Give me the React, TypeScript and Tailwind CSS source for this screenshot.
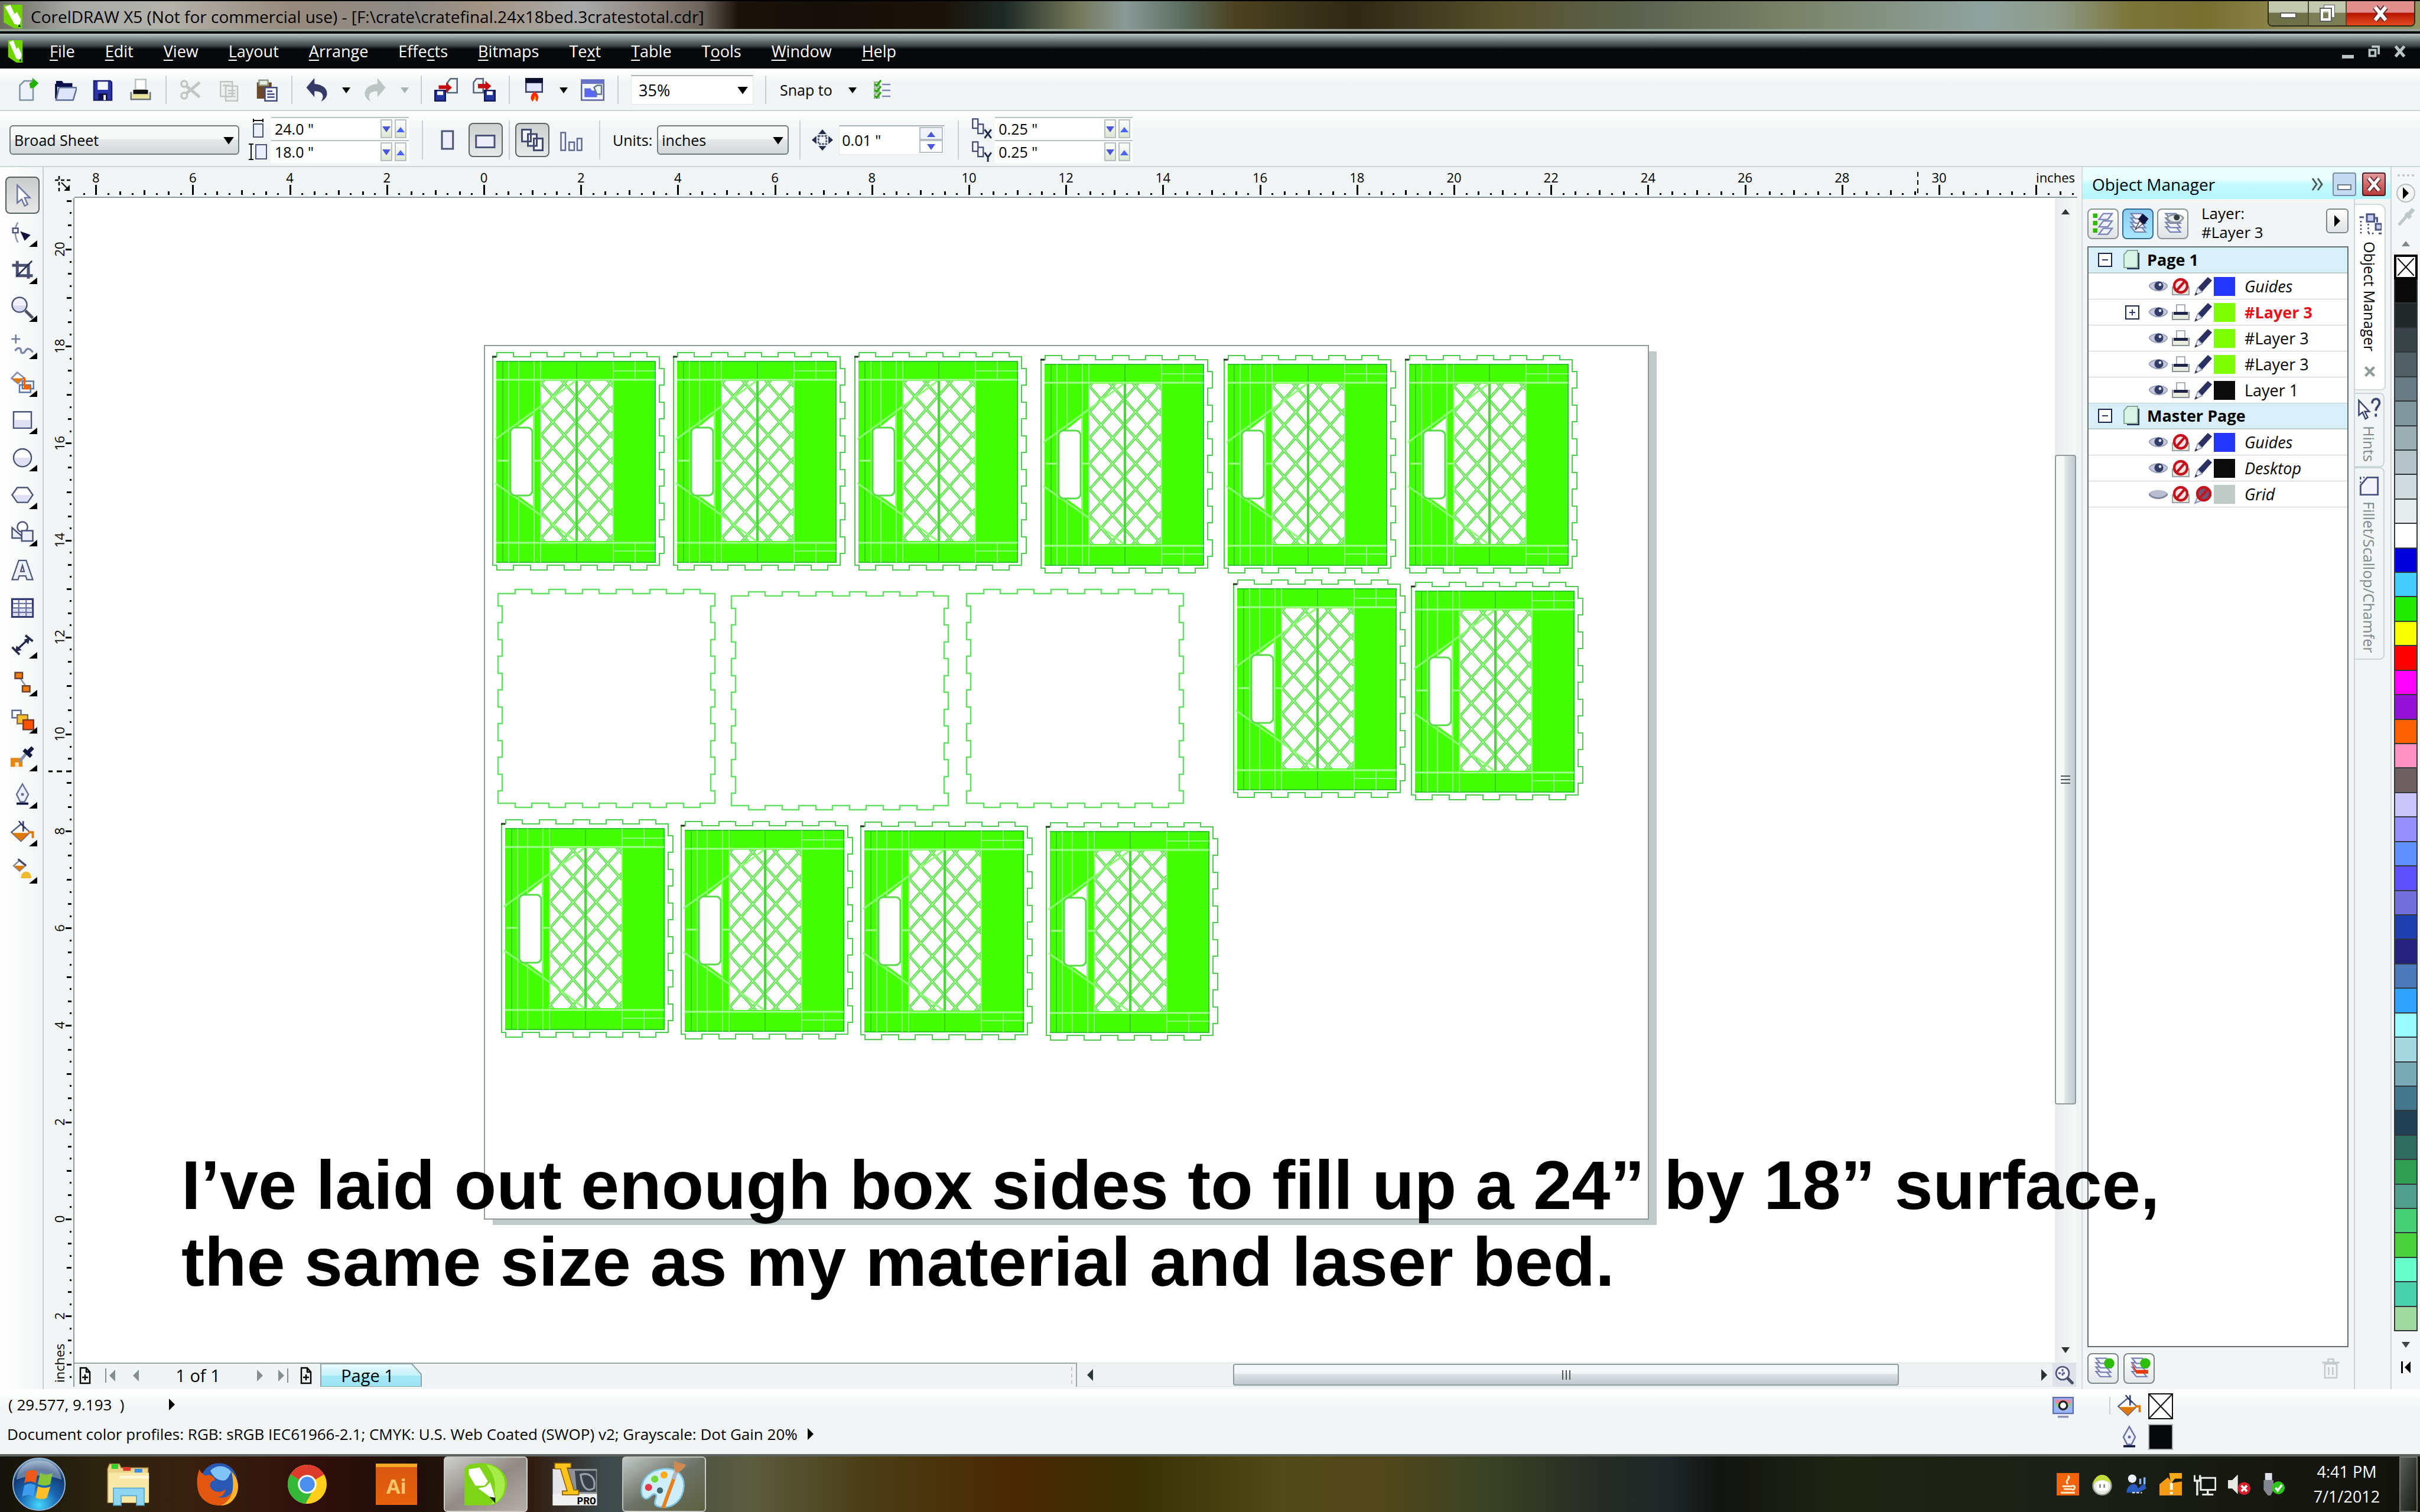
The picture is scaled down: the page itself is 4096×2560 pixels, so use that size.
import type { ReactNode } from 'react';

const MENUS: Array<[string, string, string]> = [
  ['', 'F', 'ile'], ['', 'E', 'dit'], ['', 'V', 'iew'], ['', 'L', 'ayout'], ['', 'A', 'rrange'], ['Effe', 'c', 'ts'],
  ['', 'B', 'itmaps'], ['Te', 'x', 't'], ['', 'T', 'able'], ['T', 'o', 'ols'], ['', 'W', 'indow'], ['', 'H', 'elp'],
];

const PALETTE = [
  '#0a0a0a', '#222727', '#3a4348', '#506064', '#687a82', '#80959c', '#9baeb4', '#b5c4c8', '#d2dcde', '#e6ebeb', '#ffffff',
  '#0000dd', '#46cdff', '#20ea00', '#f8ff00', '#ff0000', '#ff00ff', '#9510d8', '#fa5f00', '#ff92c0', '#6e6060', '#cac4fa',
  '#9690ff', '#5f90ff', '#5c50ff', '#726fdc', '#203fb0', '#25227e', '#4a78b8', '#2fa5ff', '#96faff', '#a6d8e0', '#7aaab5',
  '#44768e', '#204054', '#2f6b5e', '#2f9d52', '#52a08c', '#48d076', '#4ad23e', '#66ffcc', '#48d0aa', '#a0d8a0',
];

type Layer = { name: string; color: string; italic?: boolean; active?: boolean; noPrint?: boolean; hidden?: boolean; locked?: boolean };

const PAGES: Array<{ title: string; layers: Layer[] }> = [
  {
    title: 'Page 1',
    layers: [
      { name: 'Guides', color: '#2236ff', italic: true, noPrint: true },
      { name: '#Layer 3', color: '#7dff00', active: true },
      { name: '#Layer 3', color: '#7dff00' },
      { name: '#Layer 3', color: '#7dff00' },
      { name: 'Layer 1', color: '#0c0c0c' },
    ],
  },
  {
    title: 'Master Page',
    layers: [
      { name: 'Guides', color: '#2236ff', italic: true, noPrint: true },
      { name: 'Desktop', color: '#0c0c0c', italic: true, noPrint: true },
      { name: 'Grid', color: '#c0cac7', italic: true, noPrint: true, hidden: true, locked: true },
    ],
  },
];

/* ── Small building blocks ── */

function Ico({ children, className = 'size-10' }: { children: ReactNode; className?: string }) {
  return <svg viewBox="0 0 16 16" className={`shrink-0 ${className}`} fill="none" aria-hidden="true">{children}</svg>;
}

function Tri({ dir, className = 'text-black' }: { dir: 'up' | 'down' | 'left' | 'right'; className?: string }) {
  const d = {
    up: 'M-1 12 6 3l7 9z', down: 'M-1 2h14L6 12z', left: 'M11 -4v20L1 6z', right: 'M1 -4v20L11 6z',
  }[dir];
  return <svg viewBox="0 0 12 12" className={`size-3 shrink-0 overflow-visible ${className}`} fill="currentColor" aria-hidden="true"><path d={d} /></svg>;
}

function Sep({ tall }: { tall?: boolean }) {
  return (
    <div className="flex w-[21px] shrink-0 justify-center">
      <div className={tall ? 'h-[66px] w-0.5 bg-[#c9d1d3]' : 'h-12 w-0.5 bg-[#c9d1d3]'} />
    </div>
  );
}

function ToolButton({ label, children }: { label: string; children: ReactNode }) {
  return <button aria-label={label} className="flex h-14 w-16 shrink-0 items-center justify-center">{children}</button>;
}

function DropArrow({ label, dim }: { label: string; dim?: boolean }) {
  return (
    <button aria-label={label} className="flex h-14 w-[35px] shrink-0 items-center justify-center">
      <Tri dir="down" className={dim ? 'text-[#a9b2b2]' : 'text-black'} />
    </button>
  );
}

function Drop({ label, value, className, plain }: { label: string; value: string; className: string; plain?: boolean }) {
  return (
    <div className={`relative shrink-0 ${className}`}>
      <select
        aria-label={label}
        defaultValue={value}
        className={`h-[50px] w-full appearance-none leading-8 text-black ${
          plain
            ? 'border border-t-2 border-[#e3e8ea] border-t-[#a9b4b6] bg-white pl-3 text-[27px]'
            : 'rounded-md border-2 border-[#707b7b] bg-linear-to-b from-[#f7f9f9] from-45% via-[#e4e8e8] via-50% to-[#d3d8d8] pl-1.5 text-[25px]'
        }`}
      >
        <option>{value}</option>
      </select>
      <span className="pointer-events-none absolute inset-y-0 right-3 flex items-center"><Tri dir="down" className="scale-125 text-black" /></span>
    </div>
  );
}

function SpinPair({ label, value }: { label: string; value: string }) {
  return (
    <div className="flex h-[39px] w-[233px] shrink-0 items-center gap-1 border-t-2 border-[#b9c3c5] bg-white pr-1">
      <input aria-label={label} defaultValue={value} className="min-w-0 flex-1 pl-1.5 text-[25px] leading-8 text-black" />
      <button aria-label={`${label} down`} className="flex h-8 w-5 items-center justify-center border-2 border-[#b5bfc4] bg-linear-to-b from-white to-[#dbe6cf]"><Tri dir="down" className="text-[#4a56d8]" /></button>
      <button aria-label={`${label} up`} className="flex h-8 w-5 items-center justify-center border-2 border-[#b5bfc4] bg-linear-to-b from-white to-[#dbe6cf]"><Tri dir="up" className="text-[#4a66f8]" /></button>
    </div>
  );
}

function CorelMark() {
  return (
    <>
      <path d="M1 0h14v16H9L1 12z" fill="#6fd400" />
      <path d="M2 1.500 6 0l3 6-3 2zM6 8l5-3 3 5-1 4-4-1z" fill="#fff" />
      <path d="m12.500 13 1.500 2h-2z" fill="#123" />
    </>
  );
}

/* ── Standard toolbar icons ── */

const NewIcon = <Ico><path d="M3 5l3-3h6v13H3z" fill="#eef1fb" stroke="#7e93a0" /><path d="M10 4l2-1.500V1l3 2.500L12.500 6l-2 .5z" fill="#21b300" stroke="#21b300" /></Ico>;
const OpenIcon = <Ico><path d="M2 2h4l1 1.500h6V6H2z" fill="#0b1048" /><path d="M2 4v10" stroke="#0b1048" strokeWidth="1.500" /><path d="M4 6.500h12L13.500 15H2z" fill="#dfe6fa" stroke="#5f6f98" /></Ico>;
const SaveIcon = <Ico><path d="M2 2h11l1 1v12H2z" fill="#2b35a8" stroke="#1a2070" /><path d="M4.500 2.500h7V8h-7z" fill="#f3f5ff" /><path d="M5 10.500h6V15H5z" fill="#0b1048" /><path d="M8.500 11.500h1.500V15H8.500z" fill="#fff" /></Ico>;
const PrintIcon = <Ico><path d="M4.500 1h7v7h-7z" fill="#fff" stroke="#b7c3bf" /><path d="M3 8h10v3H3z" fill="#111" /><path d="M1.500 9.500v5h13v-5" stroke="#6b747c" /><path d="M2 11h12v3H2z" fill="#e6e39a" /></Ico>;
const CutIcon = <Ico><g stroke="#c0c7c5" strokeWidth="1.400"><circle cx="3.500" cy="4" r="2" /><circle cx="3.500" cy="12" r="2" /><path d="M5 5.500 14 13M5 10.500 14 3" strokeWidth="2" /></g></Ico>;
const CopyIcon = <Ico><path d="M2.500 2.500h8v10h-8zM6 5.500h8v10H6z" fill="#eef1f1" stroke="#c0c7c5" /><path d="M4 5h5M7.500 8.500h5M7.500 10.500h5M7.500 12.500h5" stroke="#c0c7c5" /></Ico>;
const PasteIcon = <Ico><path d="M1.500 3h10v11h-10z" fill="#6b4a2b" /><path d="M3 1.500h6V5H3z" fill="#e7eddc" stroke="#8c9a84" /><path d="M7 6.500h8v9H7z" fill="#fff" stroke="#3f4a80" /><path d="M8.500 9H12M8.500 11h5M8.500 13h5" stroke="#3f4a80" /></Ico>;
const UndoIcon = <Ico><path d="M1 6.500 6.500 0v4C12 4.500 15 7 15 10.500c0 2.500-1.500 4-4 5.500 1-2 1.500-3 1-4.500-.5-1.800-2.500-2.500-5.500-2.500V13z" fill="#353a66" /></Ico>;
const RedoIcon = <Ico><path d="M15 6.500 9.500 0v4C4 4.500 1 7 1 10.500 1 13 2.500 14.500 5 16c-1-2-1.500-3-1-4.500C4.500 9.700 6.500 9 9.500 9v4z" fill="#bcc5c3" /></Ico>;
const ImportIcon = <Ico><path d="M9 3l2-2.500h4.500V10H9z" fill="#eef5f3" stroke="#56647a" /><path d="M3 5h5V3l4 3.500L8 10V7.500H3z" fill="#c30d12" /><path d="M.5 8.500h7v7h-7z" fill="#2436a0" stroke="#121a5c" /><path d="M2 9h4v2.500H2z" fill="#fff" /></Ico>;
const ExportIcon = <Ico><path d="M1 3l2-2.500h4.500V10H1z" fill="#eef5f3" stroke="#56647a" /><path d="M4 4h5V2l4 3.500L9 9V7H4z" fill="#c30d12" /><path d="M8.500 8.500h7v7h-7z" fill="#2436a0" stroke="#121a5c" /><path d="M10 9h4v2.500h-4z" fill="#fff" /></Ico>;
const LaunchIcon = <Ico><path d="M2.500.5h11v9h-11z" fill="#e2e6fa" stroke="#333b66" /><path d="M2 0h12v3.500H2z" fill="#0c0f2c" /><path d="M8 9c3 2 3.500 4 2 7L8 14l-1 2c-2-2-1.500-4 1-7z" fill="#ff2a00" /><path d="M8.500 12c1 1 1 2 .5 3.500L8 14z" fill="#ffb000" /></Ico>;
const WelcomeIcon = <Ico><path d="M.5 1.500h15v13.500H.5z" fill="#f4f6ff" stroke="#5a63a8" /><path d="M0 1h16v3H0z" fill="#6670c8" /><path d="M2.500 7h4l1 1.500H11V13H2.500z" fill="#5a68f0" /><path d="M9 6.500 11 5h3v6h-3z" fill="#eef7f3" stroke="#5d7a86" /></Ico>;
const OptionsIcon = <Ico className="h-10 w-8">{[1, 6, 11].map(y => <g key={y}><path d={`M1.500 ${y + .5}h4v3.500h-4z`} fill="#e6f5dc" stroke="#8bb08b" /><path d={`M2 ${y + 2}l1.500 1.500L7 ${y - 1}`} stroke="#26a300" strokeWidth="1.500" /><path d={`M8 ${y + 2.5}h7`} stroke="#7a86b0" strokeWidth="1.200" /></g>)}</Ico>;

/* ── Toolbox ── */

const OUT = '#4a5578';
const TOOLS: Array<{ name: string; flyout?: boolean; art: ReactNode }> = [
  { name: 'Pick', art: <path d="M4.500 1v12l3-2.500 2 4.500 2-1-2-4.500h3.500z" fill="#fff" stroke="#7078a8" /> },
  { name: 'Shape', flyout: true, art: <><path d="M5 1C2.500 4 2.500 11 5 14.500" stroke="#8a92b0" /><path d="M1.500 5h3.500v3H1.500z" fill="#fff" stroke={OUT} /><path d="M6.500 7l7 2.500-4 4z" fill="#10143c" /></> },
  { name: 'Crop', flyout: true, art: <><path d="M1 4.500h11v9M4.500 1.500v10H15" stroke="#4a5070" strokeWidth="2" /><path d="M4 12 14.500 1.500" stroke="#2a3058" /></> },
  { name: 'Zoom', flyout: true, art: <><circle cx="6" cy="6" r="5" fill="#f3f4ff" stroke={OUT} /><path d="M1.800 6.500h8.400C10 9 8 10.500 6 10.500S2 9 1.800 6.500z" fill="#d9dcf3" /><path d="M10 10l5 5" stroke="#4a4f66" strokeWidth="2" /></> },
  { name: 'Freehand', flyout: true, art: <><path d="M3.500 1v6M.5 4h6" stroke="#6f7aa0" /><path d="M3 12c2-3 4-2 4 0s2 2 3 0 3-2 5 1" stroke="#7a84a8" strokeWidth="1.300" /></> },
  { name: 'Smart fill', flyout: true, art: <><path d="M4.500 1 9 4.500 5 8.500.5 5z" fill="#fff" stroke="#7f8bb0" /><path d="M1 5h7L5 8.500z" fill="#e07800" /><path d="M8 7h7.500v5H8zM6 9.500h7.500v5H6z" fill="#fff" stroke="#5b79a0" /><path d="M8.500 4.500h1.500v5h3.500v3H9z" fill="#f06400" /></> },
  { name: 'Rectangle', flyout: true, art: <><path d="M2 2.500h12v11H2z" fill="#fff" stroke={OUT} /><path d="M2.500 8h11v5h-11z" fill="#dfe1f3" /></> },
  { name: 'Ellipse', flyout: true, art: <><circle cx="8" cy="8" r="6" fill="#fff" stroke={OUT} /><path d="M2.500 8h11c-.3 3.500-2.500 5.500-5.500 5.500S2.800 11.500 2.500 8z" fill="#dfe1f3" /></> },
  { name: 'Polygon', flyout: true, art: <><path d="M4.500 3h7l3.500 5-3.500 5h-7L1 8z" fill="#fff" stroke={OUT} /><path d="M1.700 8h12.600l-3 4.500H4.700z" fill="#dfe1f3" /></> },
  { name: 'Basic shapes', flyout: true, art: <><circle cx="8" cy="4.500" r="3.500" fill="#fff" stroke={OUT} /><path d="M1 5v7h8z" fill="#eceefa" stroke={OUT} /><path d="M7.500 7h7.500v7H7.500z" fill="#eceefa" stroke={OUT} /></> },
  { name: 'Text', art: <path fillRule="evenodd" d="M1 14.500 5.500 1.500h5L15 14.500h-4l-.8-2.500H5.800L5 14.500zM6.800 9h2.400L8 5z" fill="#eef0fb" stroke={OUT} strokeWidth=".9" /> },
  { name: 'Table', art: <><path d="M1 2.500h14v12H1z" fill="#fff" stroke="#2f3a70" strokeWidth="1.300" /><path d="M1.500 8h13v6h-13z" fill="#dfe1f3" /><path d="M5.500 3v11M10.500 3v11M1.500 5.500h13M1.500 8.500h13M1.500 11.500h13" stroke="#6b76a0" strokeWidth=".9" /></> },
  { name: 'Dimension', flyout: true, art: <><path d="M4 11.500l8-7.500" stroke="#23284c" strokeWidth="1.300" /><path d="M1 9.500l5 5M10 1.500l5 4" stroke="#23284c" strokeWidth="1.500" /><path d="M3 12.500 4 8.500l3.500 3zM13 3l-4 1.500L12 7.500z" fill="#23284c" /></> },
  { name: 'Connector', flyout: true, art: <><path d="M5.500 4l5 7" stroke="#8a93a8" /><path d="M3 1.500h5v4H3zM8 10.500h5v4H8z" fill="#f27a00" stroke="#6b4438" /></> },
  { name: 'Blend', flyout: true, art: <><path d="M1 1.500h6v5H1z" fill="#fff" stroke="#5b6796" /><path d="M4.500 4.500h7v6h-7z" fill="#ffbf2b" stroke="#86744a" /><path d="M8.500 8h7v6.500h-7z" fill="#ff5200" stroke="#7a3c28" /></> },
  { name: 'Eyedropper', flyout: true, art: <><path d="M0 8.500h8v6H0z" fill="#e8860c" /><path d="M3 11.500h2.500v3H3z" fill="#ffe6c0" /><path d="M6 11l5-6" stroke="#8a92b0" strokeWidth="2" /><path d="M9 3l5 4.500M11.500 5 15 1.500" stroke="#12163e" strokeWidth="2.600" /></> },
  { name: 'Outline', flyout: true, art: <><path d="M8 1 12 8l-2.500 5h-3L4 8z" fill="#eef0fb" stroke="#6470a0" /><circle cx="8" cy="8" r="1" fill="#6470a0" /><path d="M4 13.500h8V15H4z" fill="#12163e" /></> },
  { name: 'Fill', flyout: true, art: <><path d="M7 2.500 13 8l-6 6L.5 8z" fill="#fff" stroke="#56628e" /><path d="M1 8.500h11.500L7 14z" fill="#e07800" /><path d="M12 8h3v4" stroke="#e07800" strokeWidth="1.500" /><path d="M5.500.5 10 5.500M8.500.5v7" stroke="#30386a" /></> },
  { name: 'Interactive fill', flyout: true, art: <><path d="M6 2l4 3.500L6 9 2 5.500z" fill="#fff" stroke="#8a8f9c" /><path d="M2.500 5.500h7L6 9z" fill="#e07800" /><path d="M5 1l5.500 4.500" stroke="#3f4870" strokeWidth="1.300" /><path d="M7 14c0-6 7-6 7 0z" fill="#f3b92c" /></> },
];

function Toolbox() {
  return (
    <div className="w-[74px] shrink-0 border-r-2 border-[#c5cfcf] bg-linear-to-r from-white to-[#f2f5f6] pt-4">
      <div className="grid h-[1205px] auto-rows-fr">
        {TOOLS.map((t, i) => (
          <button
            key={t.name}
            aria-label={t.name}
            className={`relative ml-[9px] flex w-[58px] items-center justify-center ${
              i === 0 ? 'rounded-lg border-2 border-[#555f5f] bg-linear-to-b from-[#c9cdcc] to-[#e8e9e7]' : ''
            }`}
          >
            <Ico>{t.art}</Ico>
            {t.flyout && <svg viewBox="0 0 14 11" className="absolute right-1 bottom-2 h-[11px] w-3.5" aria-hidden="true"><path d="M14 0v11H0z" /></svg>}
          </button>
        ))}
      </div>
    </div>
  );
}

/* ── Rulers ── */

const INCH = 82.1;
const QUARTERS = Array.from({ length: 180 }, (_, i) => i - 40);

function HRuler() {
  return (
    <svg className="block h-[52px] w-full overflow-visible bg-[#f2f5f6] text-[22px]" fontFamily='"Open Sans", sans-serif'>
      {QUARTERS.map(q => {
        const x = Math.round(693 + (q / 4) * INCH);
        if (x < 8 || x > 3392) return null;
        const len = q % 8 === 0 ? 17 : q % 4 === 0 ? 8 : q % 2 === 0 ? 6 : 3;
        return <rect key={q} x={x - 1} y={47 - len} width="3" height={len} />;
      })}
      {QUARTERS.filter(q => q % 8 === 0 && q >= -32 && q <= 120).map(q => (
        <text key={q} x={693 + (q / 4) * INCH} y="26" textAnchor="middle">{Math.abs(q / 4)}</text>
      ))}
      <text x="3386" y="26" textAnchor="end">inches</text>
      <path d="M3120 8v40" stroke="#000" strokeWidth="2" strokeDasharray="8 6" />
      <path d="M0 51h3390" stroke="#8f9d9d" strokeWidth="2" />
    </svg>
  );
}

function VRuler() {
  return (
    <div className="flex w-[52px] shrink-0 flex-col bg-[#f2f5f6]">
      <svg viewBox="0 0 52 52" className="h-[52px] w-full" fill="none" stroke="#000" aria-hidden="true">
        <path d="M19 22h28M26 15v28" strokeWidth="2.500" strokeDasharray="6 4" />
        <path d="M30 26 40 36" strokeWidth="2" />
        <path d="M44 40V30L34 40z" fill="#000" stroke="none" />
      </svg>
      <div className="relative mb-1 flex-1">
        <svg className="absolute inset-0 h-full w-full overflow-hidden text-[22px]" fontFamily='"Open Sans", sans-serif'>
          {QUARTERS.map(q => {
            const y = Math.round(1729 - (q / 4) * INCH);
            if (y < 2 || y > 2008) return null;
            const len = q % 8 === 0 ? 10 : q % 4 === 0 ? 8 : q % 2 === 0 ? 6 : 3;
            return <rect key={q} x={47 - len} y={y - 1} width={len} height="3" />;
          })}
          {QUARTERS.filter(q => q % 8 === 0 && q >= -8 && q <= 80).map(q => {
            const y = 1729 - (q / 4) * INCH;
            return <text key={q} x="35" y={y} textAnchor="middle" transform={`rotate(-90 35 ${y})`}>{Math.abs(q / 4)}</text>;
          })}
          <text x="35" y="2006" transform="rotate(-90 35 2006)">inches</text>
          <path d="M47 971H8" stroke="#000" strokeWidth="3" strokeDasharray="9 7" />
          <path d="M51 0v2100" stroke="#8f9d9d" strokeWidth="2" />
        </svg>
      </div>
    </div>
  );
}

/* ── Artwork on the page ── */

const CRATES = [
  [834, 604], [1140, 604], [1447, 604], [1762, 609], [2072, 609], [2379, 609],
  [2088, 989], [2389, 993],
  [849, 1395], [1153, 1398], [1457, 1399], [1771, 1400],
];
const BLANKS = [[843, 1005], [1238, 1009], [1636, 1005]];

function crateOutline() {
  const top = [7, 64, 121, 177, 233].map(x => `H${x}V-7H${x + 28}V0`).join('');
  const right = [0, 1, 2, 3, 4, 5].map(i => `V${20 + i * 57}H290V${48 + i * 57}H282`).join('');
  const bottom = [261, 205, 149, 92, 35].map(x => `H${x}V361H${x - 28}V353`).join('');
  return `M0 0${top}H282${right}V353${bottom}H0Z`;
}

function blankOutline() {
  const top = [0, 1, 2, 3, 4, 5].map(i => `H${29 + i * 57}V-7H${57 + i * 57}V0`).join('');
  const right = [0, 1, 2, 3, 4, 5].map(i => `V${21 + i * 57}H360V${49 + i * 57}H367`).join('');
  const bottom = [5, 4, 3, 2, 1, 0].map(i => `H${57 + i * 57}V362H${29 + i * 57}V355`).join('');
  const left = [5, 4, 3, 2, 1, 0].map(i => `V${49 + i * 57}H7V${21 + i * 57}H0`).join('');
  return `M0 0${top}H367${right}V355${bottom}H0${left}Z`;
}

const LATTICE = Array.from({ length: 16 }, (_, k) => 176 + (k - 8) * 43.6)
  .map(y => `M82 ${y}l122 ${(122 * 1.118).toFixed(1)}M82 ${y}l122 ${(-122 * 1.118).toFixed(1)}`)
  .join('');

function Artwork() {
  return (
    <svg className="absolute inset-0 h-full w-full" fill="none">
      <defs>
        <clipPath id="lattice-window"><path d="M82 41h122v271H82z" /></clipPath>
        <g id="crate">
          <path d={crateOutline()} stroke="#4ccf4c" strokeWidth="2" />
          <path d="M-1 0h7" stroke="#1d3320" strokeWidth="3" />
          <path d="M6 7h269v342H6z" fill="#44ff00" />
          <path d="M6 8h269M275 7v342M6 348h269" stroke="#2cc52c" strokeWidth="2" />
          <path d="M82 41h121v271H82z" fill="#fff" />
          <g clipPath="url(#lattice-window)">
            <path d={LATTICE} stroke="#52dd42" strokeWidth="4.500" />
            <path d={LATTICE} stroke="#b4ffa4" strokeWidth="1.500" />
          </g>
          <path d="M142 41v271" stroke="#48d838" strokeWidth="4" />
          <path d="M142 7v32M142 316v32M17 8v340" stroke="#36cf1c" strokeWidth="2" />
          <path d="M27 8v340M44 8v340M70 8v340M81 8v340M204 8v340M241 8v31M241 315v33M204 24h71M204 329h71" stroke="#8dff74" strokeWidth="2" />
          <path d="M6 39h269M6 315h269" stroke="#a2ff90" strokeWidth="3" />
          <path d="M70 97v158L44 236V118z" fill="#fff" />
          <path d="M4 140 81 84l59-43M4 214l77 54 59 44" stroke="#8dff74" strokeWidth="3" />
          <rect x="30" y="120" width="37" height="115" rx="8" fill="#fff" stroke="#57dd45" strokeWidth="3" />
          <path d="M8 176h18M71 176h10" stroke="#a2ff90" strokeWidth="3" />
          <path d="M69 97v158" stroke="#8dff74" strokeWidth="2" />
        </g>
      </defs>
      <g transform="translate(-126 -335)">
        <path d="M834 595h1970v1479H834z" fill="#c1caca" />
        <path d="M820 585h1970v1479H820z" fill="#fff" stroke="#8f9b9b" strokeWidth="2" />
        {CRATES.map(([x, y]) => <use key={`${x}-${y}`} href="#crate" x={x} y={y} />)}
        {BLANKS.map(([x, y]) => <path key={x} d={blankOutline()} transform={`translate(${x} ${y})`} stroke="#63e063" strokeWidth="2.500" />)}
      </g>
    </svg>
  );
}

function PageAdd() {
  return <svg viewBox="0 0 20 30" className="h-[30px] w-5" fill="none" stroke="#000" strokeWidth="2.500" aria-hidden="true"><path d="M2 2h10l6 7v19H2zM12 2v7h6M10 13v10M5 18h10" /></svg>;
}

function Workspace() {
  return (
    <div className="flex min-w-0 flex-1">
      <VRuler />
      <div className="flex min-w-0 flex-1 flex-col">
        <HRuler />
        <div className="flex min-h-0 flex-1">
          <div className="relative flex-1 overflow-hidden bg-white"><Artwork /></div>
          {/* Vertical scroll bar */}
          <div className="mr-[9px] flex w-9 shrink-0 flex-col items-center bg-linear-to-r from-[#e9eced] to-[#f7f9f9] py-4">
            <Tri dir="up" className="text-[#2c3434]" />
            <div className="mt-auto mb-[409px] flex h-[1100px] w-9 flex-col items-center justify-center gap-1 rounded-sm border-2 border-[#8f9b9b] bg-linear-to-r from-[#f7f9f9] from-40% via-[#dfe4e6] via-50% to-[#c3cbd0]">
              <i className="h-0.5 w-4 bg-[#4c5656]" /><i className="h-0.5 w-4 bg-[#4c5656]" /><i className="h-0.5 w-4 bg-[#4c5656]" />
            </div>
            <Tri dir="down" className="text-[#2c3434]" />
          </div>
        </div>
        {/* Page navigator and horizontal scroll bar */}
        <div className="mb-1 flex h-[41px] shrink-0 items-stretch bg-[#f1f4f5] text-[29px] leading-9">
          <div className="flex w-[1697px] shrink-0 items-center border-t-2 border-r-2 border-[#9aa8a8] pl-2">
            <button aria-label="Add page before"><PageAdd /></button>
            <button aria-label="First page" className="ml-6 flex items-center"><i className="h-6 w-0.5 bg-[#84908f]" /><Tri dir="left" className="ml-1 text-[#84908f]" /></button>
            <button aria-label="Previous page" className="ml-7"><Tri dir="left" className="text-[#84908f]" /></button>
            <span className="w-[198px] text-center">1 of 1</span>
            <button aria-label="Next page"><Tri dir="right" className="text-[#84908f]" /></button>
            <button aria-label="Last page" className="ml-6 flex items-center"><Tri dir="right" className="text-[#84908f]" /><i className="ml-1 h-6 w-0.5 bg-[#84908f]" /></button>
            <button aria-label="Add page after" className="mr-3.5 ml-5"><PageAdd /></button>
            <button className="relative h-full w-[172px] pr-3">
              <svg viewBox="0 0 172 39" preserveAspectRatio="none" className="absolute inset-0 h-full w-full" aria-hidden="true">
                <defs><linearGradient id="tab" x1="0" y1="0" x2="0" y2="1"><stop offset="0" stopColor="#eafcff" /><stop offset=".5" stopColor="#c4f1fa" /><stop offset=".52" stopColor="#a5e8f8" /><stop offset="1" stopColor="#9ce2f4" /></linearGradient></defs>
                <path d="M1 0h154l16 18v21H1z" fill="url(#tab)" stroke="#8fa3a8" strokeWidth="2" />
              </svg>
              <span className="relative">Page 1</span>
            </button>
            <span className="mr-1.5 ml-auto h-7 border-l-2 border-dashed border-[#bfc8c8]" />
          </div>
          <div className="flex flex-1 items-center justify-between border-y border-[#dfe5e6] bg-[#eef2f3] px-4">
            <Tri dir="left" className="text-[#2c3434]" />
            <div className="mr-[240px] ml-auto flex h-[37px] w-[1127px] items-center justify-center gap-1 rounded-sm border-2 border-[#8f9b9b] bg-linear-to-b from-[#f5f8f8] from-40% via-[#dbe1e4] via-50% to-[#bfc8ce]">
              <i className="h-4 w-0.5 bg-[#4c5656]" /><i className="h-4 w-0.5 bg-[#4c5656]" /><i className="h-4 w-0.5 bg-[#4c5656]" />
            </div>
            <Tri dir="right" className="-mr-2 text-[#2c3434]" />
          </div>
          <button aria-label="Navigator" className="mr-[9px] flex w-10 items-center justify-center bg-[#dfe2e8]">
            <Ico className="size-8"><circle cx="6.500" cy="6.500" r="5.500" fill="#f4f5ff" stroke={OUT} strokeWidth="1.300" /><path d="M10.500 10.500l5 5" stroke="#4a4f66" strokeWidth="2.500" /><path d="M6.500 3v7M3 6.500h7" stroke="#5560a0" strokeDasharray="2 1.500" strokeWidth="1.500" /></Ico>
          </button>
        </div>
      </div>
    </div>
  );
}

/* ── Object Manager docker ── */

function Sheets({ y = 0 }: { y?: number }) {
  return <>{[10, 7, 4, 1].map(k => <path key={k} d={`M3 ${k + y}h7l3 3.500H6z`} fill="#f2f4fd" stroke="#7883b4" strokeWidth=".9" />)}</>;
}

const EyeIcon = <Ico className="size-8"><path d="M0 7.500C3 3 13 3 16 7.500 13 13 4 13 0 7.500z" fill="#c4cada" stroke="#9ba3b8" /><circle cx="8.500" cy="7.500" r="3.800" fill="#343c68" /><circle cx="9.500" cy="6.500" r="1.200" fill="#dfe6ff" /></Ico>;
const ClosedEyeIcon = <Ico className="size-8"><path d="M0 7C3 3.500 13 3.500 16 7 14 12.500 3 12.500 0 7z" fill="#b9bdd0" /><path d="M0 7.500c3 5 13 5 16 0" stroke="#8087a0" strokeWidth="1.500" /></Ico>;
const PrinterIcon = <Ico className="size-8"><path d="M4.500 1.500h7V8h-7z" fill="#fff" stroke="#a8afb8" /><path d="M1 7.500V14h14V7.500" fill="#e8eadb" stroke="#8a929c" /><path d="M2 7.500h12v2.500H2z" fill="#1d2448" /></Ico>;
const NoPrintIcon = <Ico className="size-8"><path d="M1 8v7h14V8" fill="#e4e7da" stroke="#9aa0a8" /><circle cx="8" cy="7.500" r="5.500" fill="#f6e6e6" stroke="#c3131c" strokeWidth="2.200" /><path d="M4.500 11.500l7-8" stroke="#c3131c" strokeWidth="2.200" /></Ico>;
const PencilIcon = <Ico className="size-8"><path d="M12 0l3.500 3L7 12.500 3.500 9z" fill="#2b3060" /><path d="M3.500 9 7 12.500 1 15.500z" fill="#e6e8f4" stroke="#8e94b4" strokeWidth=".8" /><path d="M1 15.500l.8-2.500 1.500 1.500z" fill="#222" /></Ico>;
const NoPencilIcon = <Ico className="size-8"><path d="M3.500 10 7 13l-6 2.500z" fill="#e6e8f4" stroke="#8e94b4" /><circle cx="8.500" cy="7.500" r="5.500" fill="#6a5a78" stroke="#c3131c" strokeWidth="2.200" /><path d="M5 11.500l7-8" stroke="#c3131c" strokeWidth="2.200" /></Ico>;

function Toggle({ open }: { open: boolean }) {
  return (
    <button aria-label={open ? 'Collapse' : 'Expand'} className="flex size-6 items-center justify-center border-2 border-[#1c2550] bg-white">
      <Ico className="size-4"><path d={open ? 'M3 8h10' : 'M3 8h10M8 3v10'} stroke="#2f3a70" strokeWidth="2" /></Ico>
    </button>
  );
}

const dockBtn = 'flex h-[52px] w-[53px] items-center justify-center rounded-lg border-2';

function Docker() {
  return (
    <section className="flex w-[523px] shrink-0 flex-col border-l-2 border-[#d5dcdc] bg-[#f2f5f6]">
      <header className="flex h-[54px] shrink-0 items-center bg-linear-to-b from-[#eafeff] from-35% via-[#c4f9ff] via-55% to-[#b4f6ff] pt-1 pr-2 pl-4">
        <h2 className="flex-1 text-[28px] leading-9">Object Manager</h2>
        <button aria-label="Collapse docker" className="mr-4"><svg viewBox="0 0 20 24" className="h-6 w-5" fill="none" stroke="#4a5858" strokeWidth="3"><path d="M2 2l7 10-7 10M11 2l7 10-7 10" /></svg></button>
        <button aria-label="Minimize docker" className="mr-2.5 flex h-10 w-10 items-end justify-center rounded-sm border-2 border-[#7890a8] bg-[#c3dcf2] pb-2"><i className="h-2.5 w-6 border-2 border-[#6a7888] bg-white" /></button>
        <button aria-label="Close docker" className="flex h-10 w-10 items-center justify-center rounded-sm border-2 border-[#4c1c24] bg-linear-to-b from-[#e0989c] to-[#b83a3a]"><Ico className="size-7"><path d="M3 2l10 12M13 2 3 14" stroke="#5c1c22" strokeWidth="5" /><path d="M3 2l10 12M13 2 3 14" stroke="#fff" strokeWidth="3" /></Ico></button>
      </header>
      <div className="flex min-h-0 flex-1">
        <div className="flex w-[450px] flex-col pt-4 pl-2">
          <div className="flex items-start gap-1.5">
            <button aria-label="Show object properties" className={`${dockBtn} border-[#8a9494] bg-linear-to-b from-white to-[#dfe3e3]`}>
              <Ico>{[1, 6, 11].map(y => <g key={y}><path d={`M1 ${y}h3v3H1z`} fill="#2fb800" /><path d={`M8 ${y}h6l-3 4H5z`} fill="#eef0fc" stroke="#7883b4" strokeWidth=".9" /></g>)}</Ico>
            </button>
            <button aria-label="Edit across layers" aria-pressed="true" className={`${dockBtn} border-[#2f6c9c] bg-linear-to-b from-[#8ecdf0] to-[#a8e8ff]`}>
              <Ico><Sheets /><path d="M11 1l4 3.500-3 4L8 5z" fill="#0e1240" /><path d="M9 6l2 2-5 4z" fill="#fff" stroke="#444" strokeWidth=".6" /></Ico>
            </button>
            <button aria-label="Layer manager view" className={`${dockBtn} border-[#8a9494] bg-linear-to-b from-white to-[#dfe3e3]`}>
              <Ico><Sheets /><path d="M4 4c2-3 9-3 11 0-2 4-9 4-11 0z" fill="#e3e8e8" stroke="#8b9494" /><circle cx="10.500" cy="3.700" r="2" fill="#3a4040" /></Ico>
            </button>
            <p className="-mt-2 ml-4 flex-1 text-[26px] leading-8">Layer:<br />#Layer 3</p>
            <button aria-label="Object manager options" className="flex h-[42px] w-[38px] items-center justify-center rounded-md border-2 border-[#7b8686] bg-linear-to-b from-white to-[#dfe3e3]"><Tri dir="right" /></button>
          </div>
          <div className="mt-2 min-h-0 w-[442px] flex-1 border-2 border-[#63706f] bg-white text-[27px]">
            {PAGES.map(p => (
              <ul key={p.title}>
                <li className="flex h-11 items-center border-b-2 border-[#bccbd0] bg-[#d9f0fa] pl-4">
                  <Toggle open />
                  <svg viewBox="0 0 28 34" className="ml-[19px] h-[34px] w-7" aria-hidden="true"><path d="M6 5h21v28H6z" fill="#1c2c50" /><path d="M7 1h17v29H1V8z" fill="#d6f5e4" stroke="#86a79a" strokeWidth="2" /></svg>
                  <span className="ml-3 leading-8 font-bold">{p.title}</span>
                </li>
                {p.layers.map((l, i) => (
                  <li key={i} className="flex h-11 items-center border-b border-[#c6d0d0] pl-[62px]">
                    <span className="mr-4 w-6">{l.active && <Toggle open={false} />}</span>
                    {l.hidden ? ClosedEyeIcon : EyeIcon}
                    <span className="w-1.5" />
                    {l.noPrint ? NoPrintIcon : PrinterIcon}
                    <span className="w-1.5" />
                    {l.locked ? NoPencilIcon : PencilIcon}
                    <span className="ml-0.5 h-8 w-9" style={{ background: l.color }} />
                    <span className={`ml-4 leading-8 ${l.italic ? 'italic' : ''} ${l.active ? 'font-bold text-[#e8121c]' : ''}`}>{l.name}</span>
                  </li>
                ))}
              </ul>
            ))}
          </div>
          <div className="flex h-[71px] shrink-0 items-center gap-2">
            <button aria-label="New layer" className={`${dockBtn} border-[#7b8686] bg-linear-to-b from-white to-[#e3e7e7]`}><Ico><Sheets /><circle cx="12" cy="4.500" r="3.500" fill="#2ebd0c" /></Ico></button>
            <button aria-label="New master layer" className={`${dockBtn} border-[#7b8686] bg-linear-to-b from-white to-[#e3e7e7]`}><Ico><Sheets /><path d="M2 3.500 6 9h8v2.500H6z" fill="#e8380c" /><circle cx="12" cy="4.500" r="3.500" fill="#2ebd0c" /></Ico></button>
            <button aria-label="Delete" className="mr-3 ml-auto"><Ico className="size-9"><path d="M3.500 4.500h9V15h-9zM1.500 3.500h13M6 3V1h4v2M6.500 7v6M9.500 7v6" stroke="#c3cccb" strokeWidth="1.200" /></Ico></button>
          </div>
        </div>
        {/* Docker tabs */}
        <nav className="ml-auto flex w-[62px] flex-col border-l-2 border-[#ccd5d5] text-[25px] leading-8">
          <div className="mt-2 flex h-[316px] w-[52px] flex-col items-center rounded-tr-xl rounded-br-lg border-2 border-l-0 border-[#d0d8d8] bg-white pt-3">
            <Ico><path d="M1 3.500h3M6 1.500h5v5H6zM11 4h2v3M12 8h4v4h-4zM14 14.500h2" stroke="#4c5684" strokeWidth="1.200" fill="#c8cdf0" /><path d="M2 6v9M7 8v7M7 14.500h5" stroke="#30386a" strokeDasharray="1 1.500" /></Ico>
            <button className="mt-2.5 [writing-mode:vertical-rl]">Object Manager</button>
            <button aria-label="Close tab" className="mt-6"><Ico className="size-5"><path d="M2 2l12 12M14 2 2 14" stroke="#8f9b9b" strokeWidth="3.500" /></Ico></button>
          </div>
          <div className="mt-1 flex h-[126px] w-[50px] flex-col items-center rounded-r-lg border-2 border-l-0 border-[#ccd5d5] pt-1.5">
            <Ico><path d="M1 2v10l2.500-2 2 4.500 1.500-1L5 9.500h3z" fill="#fff" stroke="#3a4470" /><path d="M10 4c0-4 5-4 5-.5C15 6 12.500 6 12.500 9M12.500 11v2" stroke="#3a4470" strokeWidth="1.500" /></Ico>
            <button className="mt-2 text-[#7d8888] [writing-mode:vertical-rl]">Hints</button>
          </div>
          <div className="flex h-[326px] w-[50px] flex-col items-center rounded-r-lg border-2 border-l-0 border-[#ccd5d5] pt-3">
            <Ico className="size-9"><path d="M6.500 1.500h8v13h-13v-7z" fill="#f3f4fd" stroke="#4c5684" strokeWidth="1.300" /><path d="M1 1.500h5M1.500 2v5" stroke="#30386a" strokeDasharray="1 1.500" /></Ico>
            <button className="mt-2 text-[#7d8888] [writing-mode:vertical-rl]">Fillet/Scallop/Chamfer</button>
          </div>
        </nav>
      </div>
    </section>
  );
}

function Palette() {
  return (
    <div className="flex w-[50px] shrink-0 flex-col items-center border-l-2 border-[#ccd5d5] bg-[#f5f7f8] pt-3">
      <span className="w-7 border-t-4 border-dotted border-[#bcc6c6]" />
      <button aria-label="Palette options" className="mt-3 flex size-8 items-center justify-center rounded-full border-2 border-[#b4bebe] bg-[#f4f6f6]"><Tri dir="right" /></button>
      <Ico className="mt-2 size-8"><path d="M2 15l7-8" stroke="#bfc8c8" strokeWidth="2.500" /><path d="M8 5l4 4M10 6.500 14.500 1.500" stroke="#bfc8c8" strokeWidth="3.500" /></Ico>
      <button aria-label="Scroll up" className="flex h-12 items-center pt-2"><Tri dir="up" className="text-[#7d8888]" /></button>
      <button aria-label="No color" className="h-[42px] w-10 border-4 border-black bg-white p-0.5"><svg viewBox="0 0 30 30" preserveAspectRatio="none" className="h-full w-full" stroke="#000" strokeWidth="2"><path d="M0 0l30 30M30 0 0 30" /></svg></button>
      <div className="flex w-10 flex-1 flex-col border-x-2 border-[#30383c]">
        {PALETTE.map(c => <button key={c} aria-label={c} className="w-full flex-1 border-b-2 border-[#30383c]" style={{ background: c }} />)}
      </div>
      <button aria-label="Scroll down" className="flex h-[43px] items-center"><Tri dir="down" className="text-[#3c4646]" /></button>
      <button aria-label="Expand palette" className="flex h-[55px] items-start pt-2"><i className="h-5 w-[3px] bg-black" /><Tri dir="left" className="mt-1 ml-0.5" /></button>
    </div>
  );
}

/* ── Taskbar icons ── */

function TaskArt({ children, className = 'size-[78px]' }: { children: ReactNode; className?: string }) {
  return <svg viewBox="0 0 48 48" className={`shrink-0 ${className}`} fill="none" aria-hidden="true">{children}</svg>;
}

const StartArt = (
  <TaskArt className="size-[92px]">
    <defs><radialGradient id="orb" cx=".5" cy=".9" r=".9"><stop offset="0" stopColor="#46d8ff" /><stop offset=".4" stopColor="#1a68b4" /><stop offset=".75" stopColor="#12386e" /><stop offset="1" stopColor="#8fb0cc" /></radialGradient></defs>
    <circle cx="24" cy="24" r="23" fill="url(#orb)" stroke="#8fb4d4" />
    <path d="M4 20C6 8 14 3 24 3s18 5 20 17c-12-5-28-5-40 0z" fill="#fff" opacity=".35" />
    <path d="M13 13c4-2 7-2 10 0l-2 10c-3-2-6-2-10 0z" fill="#ee5a1c" />
    <path d="M25 14c4 2 7 2 11 0l-2 10c-4 2-8 1-11 0z" fill="#86c43a" />
    <path d="M11 25c4-2 7-2 10 0l-2 10c-3-2-6-2-10 0z" fill="#3f9cee" />
    <path d="M23 26c3 1 7 2 11 0l-3 10c-4 2-7 1-10 0z" fill="#fcbf2a" />
  </TaskArt>
);

const ExplorerArt = (
  <TaskArt>
    <path d="M2 8l2-5h10l2 4h28v36H2z" fill="#ecd488" stroke="#b3954a" />
    <path d="M6 3h7v5H6z" fill="#2fcf2f" /><path d="M18 6h8v4h-8z" fill="#d83a2c" /><path d="M30 8h8v4h-8z" fill="#3a8ee0" />
    <path d="M3 12h42v31H3z" fill="#f8e9a6" /><path d="M14 15h31v3H14z" fill="#fff8d8" />
    <path d="M8 46V28h32v18h-8V36H16v10z" fill="#8fd6f2" stroke="#4fa3cc" />
  </TaskArt>
);

const FirefoxArt = (
  <TaskArt>
    <circle cx="25" cy="21" r="19" fill="#2857b4" /><path d="M16 10c6-7 16-6 22 1-3 4-4 10-10 9s-9-4-12-10z" fill="#7fc4f4" />
    <path d="M5 8c0 3 3 5 6 7 4-2 9 0 10 5-4 0-6 3-5 7 3 5 10 7 16 2-1 6-5 9-9 8 8 3 15-2 17-8 2-7 1-12-2-18 9 8 9 22 1 30C29 50 10 47 4 33 1 24 2 14 5 8z" fill="#e2570f" />
    <path d="M38 11c9 8 9 22 1 30-4 4-8 5-12 5 12-5 15-18 11-35z" fill="#ffb52b" />
  </TaskArt>
);

const ChromeArt = (
  <TaskArt className="size-[72px]">
    <circle cx="24" cy="24" r="22" fill="#ffcf1c" />
    <path d="M24 24 5 13A22 22 0 0 1 43 13z" fill="#dd3b2b" /><path d="M24 13h19a22 22 0 0 0-19-11z" fill="#dd3b2b" />
    <path d="M5 13a22 22 0 0 0 17 33l9-16-7-6z" fill="#35b73a" />
    <circle cx="24" cy="24" r="10.500" fill="#fff" /><circle cx="24" cy="24" r="8.500" fill="#4a8ef0" />
  </TaskArt>
);

const CorelArt = (
  <TaskArt>
    <path d="M2 8C4 3 12 2 20 2c14 0 25 8 26 20 0 14-8 24-20 24H2z" fill="#7fd419" />
    <path d="M24 3c12 2 19 9 20 20 0 12-6 20-14 22 5-12 7-28-6-42z" fill="#a8ec4a" />
    <path d="M6 8 18 6l9 15-4 5H13L6 14zM15 28l9-2 5-5 5 16v5z" fill="#fff" stroke="#7fd419" />
    <path d="M28 37l6 1v6z" fill="#1b2b10" />
  </TaskArt>
);

const VproArt = (
  <TaskArt>
    <path d="M1 8h46v38H1z" fill="#8d9198" /><path d="M1 8h16v38H1z" fill="#e5e6ea" /><path d="M24 10h22v22H26z" fill="#3a3e46" /><path d="M30 14c10-3 16 4 14 14-6 4-12 2-14-14z" stroke="#9aa0aa" strokeWidth="2" />
    <path d="M1 34h46v12H1z" fill="#f1f1f1" />
    <path d="M3 2h17v5h-4l7 23h5v5H11v-4h5L9 8H3z" fill="#ffc41c" stroke="#8a5c00" />
    <text x="46" y="45" textAnchor="end" fontSize="11" fontWeight="700" fontFamily='"Liberation Mono", monospace' fill="#000">PRO</text>
  </TaskArt>
);

const PaintArt = (
  <TaskArt className="size-[84px]">
    <path d="M2 30C2 17 12 10 24 9c13-1 20 7 19 18-1 12-10 20-20 19-5 0-8-1-8-4 0-4 3-6 1-8-3-3-6 5-10 4-3-1-4-4-4-8z" fill="#cdeefa" stroke="#7fc4e0" strokeWidth="1.500" />
    <circle cx="9" cy="27" r="3.500" fill="#e23b4a" /><circle cx="15" cy="19" r="3.500" fill="#74d83a" /><circle cx="24" cy="15" r="3.500" fill="#ffab1c" /><circle cx="20" cy="30" r="3" fill="#3f6874" />
    <path d="M34 17 23 47" stroke="#e8801c" strokeWidth="3.500" /><path d="M36 11l-3 8" stroke="#aeb8bf" strokeWidth="4" /><path d="M34 1c3 3 7 2 11 4-1 4-6 7-9 8-3-3-3-7-2-12z" fill="#cf8a54" />
  </TaskArt>
);

const TRAY: Array<{ name: string; art: ReactNode }> = [
  { name: 'Java', art: <><path d="M0 0h16v16H0z" fill="#f0620c" /><path d="M8 2c3 2-3 3 0 6M4 9.500h7M5 11.500h6M3 14h10M11 9c3 0 2 3 0 3" stroke="#ffe9c8" strokeWidth="1.300" /></> },
  { name: 'Updates', art: <><circle cx="8" cy="9" r="6.500" fill="#e6e8e2" stroke="#9aa09a" /><path d="M2 8c0-9 12-9 12 0-2-4-10-4-12 0z" fill="#c4dc3a" /><path d="M4 12V7c2-2 6-2 8 0v5c-2 1-6 1-8 0z" fill="#fff" /><path d="M6.500 8v2.500M9.500 8v2.500" stroke="#777" /></> },
  { name: 'Users', art: <><circle cx="5" cy="4" r="3" fill="#eef4ff" /><path d="M1 14c0-7 8-8 8-3l5-4 1 4-6 3z" fill="#2a5cc0" /><path d="M10 4h1.500v4H10zM13 3h1.500v5H13z" fill="#86b4f4" /><path d="M5 14h7" stroke="#c8cfda" strokeDasharray="2 1" /></> },
  { name: 'Alert', art: <><path d="M0 8l6-5 3 4 7-1v10H0z" fill="#f39a16" /><path d="M7 0h9v4h-5L8 8z" fill="#f7a81c" /><path d="M8.500 7v5M8.500 13.500V15" stroke="#fff" strokeWidth="2" /></> },
  { name: 'Network', art: <><path d="M5 3.500h10.500v8.500H5z" fill="#12140f" stroke="#e6e9e4" strokeWidth="1.300" /><path d="M10 12v3M6 15.500h8M.5 1.500v4h4v-4M2.500 5.500V16" stroke="#e6e9e4" strokeWidth="1.500" /></> },
  { name: 'Volume', art: <><path d="M0 5h3l4-4v14l-4-4H0z" fill="#e6e9e4" /><circle cx="11.500" cy="11" r="4.500" fill="#d81f2c" /><path d="M9.500 9l4 4M13.500 9l-4 4" stroke="#fff" strokeWidth="1.500" /></> },
  { name: 'Safely remove hardware', art: <><path d="M2 0h5v5H2z" fill="#dfe1e8" /><path d="M1 5h7v7l-2 4H4l-3-4z" fill="#81868f" /><circle cx="11.500" cy="10.500" r="4.500" fill="#2fc41c" /><path d="M9.500 10.500l1.500 2 3-4" stroke="#fff" strokeWidth="1.500" /></> },
];

function Taskbar() {
  const slot = 'flex h-[94px] w-[142px] shrink-0 items-center justify-center';
  const lit = 'rounded-md border-2 border-[#d6d6d0]/80';
  return (
    <footer className="flex h-[98px] shrink-0 items-center border-t-4 border-[#5c625c] bg-[linear-gradient(90deg,#14120a_0%,#2d2410_4%,#38200e_8%,#300f0b_13%,#1d0f08_17%,#321c10_22%,#3d4a4c_25%,#5b5c3e_31%,#4a3c14_36%,#4a2804_42%,#3a3004_47%,#524a1a_53%,#53461a_57%,#3c4424_61%,#262c24_66%,#1e2628_69%,#121410_71%,#1f2414_76%,#1b2016_85%,#12120c_100%)]">
      <button aria-label="Start" className="flex w-[143px] shrink-0 justify-center pr-3">{StartArt}</button>
      <div className="flex gap-[9px] pl-1">
        <button aria-label="Windows Explorer" className={slot}>{ExplorerArt}</button>
        <button aria-label="Firefox" className={slot}>{FirefoxArt}</button>
        <button aria-label="Chrome" className={slot}>{ChromeArt}</button>
        <button className={slot}><span className="flex h-[70px] w-[70px] items-center justify-center border-t-[6px] border-[#f5a623] bg-linear-to-b from-[#d8560e] to-[#e8620c] text-[34px] font-bold text-[#ffc46a]">Ai</span></button>
        <button aria-label="CorelDRAW" className={`${slot} ${lit} bg-linear-to-br from-[#cfd0cc] via-[#918a84] to-[#b5aeaa]`}>{CorelArt}</button>
        <button aria-label="VPRO" className={slot}>{VproArt}</button>
        <button aria-label="Paint" className={`${slot} ${lit} bg-linear-to-br from-[#c2cac8] via-[#6d7266] to-[#5c6040]`}>{PaintArt}</button>
      </div>
      <div className="ml-auto flex items-center gap-5">
        {TRAY.map(t => <button key={t.name} aria-label={t.name}><Ico className="size-[38px]">{t.art}</Ico></button>)}
      </div>
      <p className="ml-10 w-[130px] text-center text-[27px] leading-[42px] text-white">4:41 PM<br />7/1/2012</p>
      <button aria-label="Show desktop" className="mr-1 ml-6 h-[94px] w-[31px] border-2 border-[#70756c] bg-linear-to-br from-[#5b605a] to-[#181a14]" />
    </footer>
  );
}

/* ── Bars around the workspace ── */

function TitleBar() {
  return (
    <>
      <header className="flex h-[53px] shrink-0 items-start border-t-2 border-b-4 border-t-black border-b-[#93a199] bg-[linear-gradient(90deg,#6b6b60_0%,#a9aba8_3%,#b3b1aa_7%,#97897c_12%,#8d8a86_17%,#a39384_20%,#a9abab_24%,#8d837c_27%,#6b635c_29%,#1a130b_30.500%,#140f09_34%,#1a130a_39%,#1e2a26_41.500%,#74785a_44.500%,#8a9a98_46.500%,#5a6a5c_49%,#4c4220_51%,#2e2814_56%,#57502c_62%,#5b6450_68%,#7a8268_74%,#8fa39f_82%,#8d9a88_85%,#7c753a_88%,#776f2f_91%,#908850_95%,#8f9460_100%)] pl-1">
        <svg viewBox="0 0 16 16" preserveAspectRatio="none" className="mt-1.5 h-10 w-9" aria-hidden="true"><CorelMark /></svg>
        <h1 className="ml-3 flex-1 text-[28px] leading-[52px] text-black">CorelDRAW X5 (Not for commercial use) - [F:\crate\cratefinal.24x18bed.3cratestotal.cdr]</h1>
        <div className="mr-2 flex h-[43px] overflow-hidden rounded-b-lg border-2 border-t-0 border-[#2b2b1c] text-white">
          <button aria-label="Minimize" className="flex w-[66px] items-end justify-center bg-linear-to-b from-[#c2c8ae] from-45% to-[#6e7048] to-50% pb-3"><i className="h-2.5 w-7 border-2 border-[#5c5f58] bg-white" /></button>
          <button aria-label="Restore" className="flex w-[66px] items-center justify-center border-x-2 border-[#4c4c34] bg-linear-to-b from-[#c2c8ae] from-45% to-[#7c7e55] to-50%"><svg viewBox="0 0 30 30" className="size-[30px]" fill="none"><path d="M9 3h16v19M5 8h15v18H5z" stroke="#5c5f68" strokeWidth="6" /><path d="M10 3h15v18M6 9h13v16H6z" stroke="#fff" strokeWidth="4" /></svg></button>
          <button aria-label="Close" className="flex w-[114px] items-center justify-center bg-linear-to-b from-[#e08e8a] from-45% via-[#b81200] via-50% to-[#e04a20]"><svg viewBox="0 0 30 30" className="size-[30px]"><path d="M6 4l18 22M24 4 6 26" stroke="#5c2c30" strokeWidth="10" /><path d="M6 4l18 22M24 4 6 26" stroke="#fff" strokeWidth="6" /></svg></button>
        </div>
      </header>
      <nav className="flex h-[63px] shrink-0 items-center border-t-4 border-black bg-linear-to-b from-[#b9c5c6] via-[#3a4242] via-35% to-[#06080a] to-45% pr-6 pl-3 text-[27px] leading-9 text-white">
        <svg viewBox="0 0 16 16" preserveAspectRatio="none" className="mr-11 h-[38px] w-7" aria-hidden="true"><CorelMark /></svg>
        <div className="flex flex-1 gap-[51px]">
          {MENUS.map(([a, key, b]) => <button key={a + key + b}>{a}<span className="underline decoration-2 underline-offset-4">{key}</span>{b}</button>)}
        </div>
        <div className="flex items-center gap-6 text-[#b9c4c4]">
          <button aria-label="Minimize document" className="flex h-6 w-5 items-end"><i className="h-1.5 w-full bg-current" /></button>
          <button aria-label="Restore document"><Ico className="size-5"><path d="M2 6h8v8H2zM5 1.500h9.500V12" stroke="currentColor" strokeWidth="3" /></Ico></button>
          <button aria-label="Close document"><Ico className="size-5"><path d="M2 1l12 14M14 1 2 15" stroke="currentColor" strokeWidth="4" /></Ico></button>
        </div>
      </nav>
    </>
  );
}

const barBg = 'shrink-0 border-b-2 border-[#cdd6d6] bg-linear-to-b from-white to-[#f2f5f6] to-35%';

function StandardBar() {
  return (
    <div className={`flex h-[72px] items-center pt-0.5 pl-3.5 ${barBg}`}>
      <ToolButton label="New">{NewIcon}</ToolButton>
      <ToolButton label="Open">{OpenIcon}</ToolButton>
      <ToolButton label="Save">{SaveIcon}</ToolButton>
      <ToolButton label="Print">{PrintIcon}</ToolButton>
      <Sep />
      <ToolButton label="Cut">{CutIcon}</ToolButton>
      <ToolButton label="Copy">{CopyIcon}</ToolButton>
      <ToolButton label="Paste">{PasteIcon}</ToolButton>
      <Sep />
      <ToolButton label="Undo">{UndoIcon}</ToolButton>
      <DropArrow label="Undo history" />
      <ToolButton label="Redo">{RedoIcon}</ToolButton>
      <DropArrow label="Redo history" dim />
      <Sep />
      <ToolButton label="Import">{ImportIcon}</ToolButton>
      <ToolButton label="Export">{ExportIcon}</ToolButton>
      <Sep />
      <ToolButton label="Application launcher">{LaunchIcon}</ToolButton>
      <DropArrow label="Applications" />
      <ToolButton label="Welcome screen">{WelcomeIcon}</ToolButton>
      <Sep />
      <Drop label="Zoom level" value="35%" plain className="ml-3 w-[207px]" />
      <div className="w-2.5" />
      <Sep />
      <button className="ml-3.5 flex items-center gap-7 text-[25px] leading-8">Snap to <Tri dir="down" /></button>
      <button aria-label="Options" className="ml-7">{OptionsIcon}</button>
    </div>
  );
}

const pressed = 'rounded-lg border-2 border-[#5c6666] bg-linear-to-b from-[#cdd2d1] to-[#e6e9e8]';

function PropertyBar() {
  return (
    <div className={`flex h-[95px] items-center pt-1 pl-4 ${barBg}`}>
      <Drop label="Page size" value="Broad Sheet" className="w-[389px]" />
      <div className="ml-4 flex flex-col">
        <div className="flex items-center gap-1.5">
          <Ico className="size-8"><path d="M4 4.500h8v11H4z" fill="#eceefa" stroke={OUT} /><path d="M4 0v3M12 0v3M4 1.500h8" stroke="#111" /></Ico>
          <SpinPair label="Page width" value={'24.0 "'} />
        </div>
        <div className="flex items-center gap-1.5">
          <Ico className="size-8"><path d="M6 2.500h9v12H6z" fill="#eceefa" stroke={OUT} /><path d="M0 2h4M0 15h4M2 2v13" stroke="#111" /></Ico>
          <SpinPair label="Page height" value={'18.0 "'} />
        </div>
      </div>
      <div className="w-3" />
      <Sep tall />
      <button aria-label="Portrait" className="ml-1 flex h-[58px] w-[58px] items-center justify-center"><Ico><path d="M4 2h7.500v12H4z" fill="#eceefa" stroke={OUT} strokeWidth="1.200" /></Ico></button>
      <button aria-label="Landscape" aria-pressed="true" className={`ml-1.5 flex h-[58px] w-[58px] items-center justify-center ${pressed}`}><Ico><path d="M1.500 5h12.500v8H1.500z" fill="#eceefa" stroke={OUT} strokeWidth="1.200" /></Ico></button>
      <Sep tall />
      <button aria-label="All pages" aria-pressed="true" className={`flex h-[58px] w-[58px] items-center justify-center ${pressed}`}><Ico><path d="M1 1h6v8H1zM5 4h6v8H5zM9 7h6v8H9z" fill="#f3f4ff" stroke="#3f4a70" strokeWidth="1.200" /></Ico></button>
      <button aria-label="Current page" className="mx-2 flex h-[58px] w-[58px] items-center justify-center"><Ico><path d="M1 3h3v12H1zM6.500 9.500H10V15H6.500zM12 7h3v8h-3z" fill="#f3f4ff" stroke="#5f6a90" /></Ico></button>
      <Sep tall />
      <label className="ml-3 flex items-center gap-2 text-[25px] leading-8">Units: <Drop label="Units" value="inches" className="w-[223px]" /></label>
      <div className="w-2" />
      <Sep tall />
      <Ico className="mx-2.5 size-9"><path d="M5 5h6v6H5z" stroke={OUT} strokeWidth="1.300" strokeDasharray="1.500 .8" /><path d="M8 0l3 3.500H5zM8 16l3-3.500H5zM0 8l3.500-3v6zM16 8l-3.500-3v6z" fill="#222a4c" /></Ico>
      <div className="flex h-[50px] w-[179px] items-center border border-t-2 border-[#e3e8ea] border-t-[#a9b4b6] bg-white pr-0.5">
        <input aria-label="Nudge offset" defaultValue={'0.01 "'} className="min-w-0 flex-1 pl-1 text-[25px] leading-8" />
        <div className="flex h-11 w-10 flex-col border-2 border-[#b5bfc4]">
          <button aria-label="Nudge up" className="flex flex-1 items-center justify-center bg-[#f1f3fa]"><Tri dir="up" className="text-[#4a56d8]" /></button>
          <button aria-label="Nudge down" className="flex flex-1 items-center justify-center border-t-4 border-[#b5bfc4]"><Tri dir="down" className="text-[#4a56d8]" /></button>
        </div>
      </div>
      <div className="w-3" />
      <Sep tall />
      <div className="ml-3 flex flex-col">
        {['x', 'y'].map(axis => (
          <div key={axis} className="flex items-center gap-1">
            <Ico className="size-9"><path d="M1 1h4v7H1zM5 5h4v7H5z" fill="#f3f4ff" stroke="#3f4a70" /><path d={axis === 'x' ? 'M10 9l5 6.500M15 9l-5 6.500' : 'M10 9l2.500 3.500L15 9M12.500 12.500V16'} stroke="#222a4c" strokeWidth="1.300" /></Ico>
            <SpinPair label={`Duplicate distance ${axis}`} value={'0.25 "'} />
          </div>
        ))}
      </div>
    </div>
  );
}

function StatusBar() {
  return (
    <div className="flex h-[110px] shrink-0 bg-linear-to-b from-white to-[#f2f5f6] to-30% text-[26px] leading-8">
      <div className="flex flex-1 flex-col pt-2.5">
        <div className="flex items-center gap-[74px] pl-3.5"><span>( 29.577, 9.193&nbsp; )</span><Tri dir="right" /></div>
        <div className="mt-[18px] flex items-center gap-4 pl-3"><span>Document color profiles: RGB: sRGB IEC61966-2.1; CMYK: U.S. Web Coated (SWOP) v2; Grayscale: Dot Gain 20%</span><Tri dir="right" /></div>
      </div>
      <div className="flex w-[622px] items-start gap-3 pt-[7px]">
        <Ico className="mt-1.5 mr-12 size-9"><path d="M.5.5h15v12H.5z" fill="#9ab4f8" stroke="#5b6fb0" /><path d="M2 2h12v3H2z" fill="#e48a98" /><path d="M2 5h12v2.500H2z" fill="#8ccf8c" /><circle cx="8" cy="6.500" r="3" fill="#fff" stroke="#222" strokeWidth="1.500" /><path d="M4 15h8" stroke="#8a93b8" strokeWidth="1.500" /></Ico>
        <span className="mt-1.5 h-[30px] w-0.5 bg-[#c9d1d3]" />
        <div className="flex flex-col gap-2">
          <div className="flex items-center gap-3">
            <Ico>{TOOLS[17].art}</Ico>
            <svg viewBox="0 0 42 44" className="h-11 w-[42px]"><path d="M1 1h40v42H1zM1 1l40 42M41 1 1 43" fill="#fff" stroke="#111" strokeWidth="2" /></svg>
          </div>
          <div className="flex items-center gap-3">
            <Ico>{TOOLS[16].art}</Ico>
            <span className="h-11 w-[42px] border-2 border-[#a9b2b2] bg-[#07080a]" />
          </div>
        </div>
      </div>
    </div>
  );
}

export default function App() {
  return (
    <div className="relative flex h-screen w-full flex-col overflow-hidden bg-[#f2f5f6] font-['Open_Sans',sans-serif] text-black">
      <TitleBar />
      <StandardBar />
      <PropertyBar />
      <main className="relative flex min-h-0 flex-1">
        <Toolbox />
        <Workspace />
        <Docker />
        <Palette />
        {/* Caption over the workspace */}
        <p className="pointer-events-none absolute bottom-[150px] left-[307px] font-['Liberation_Sans',sans-serif] text-[117px] leading-[130px] font-bold whitespace-nowrap">
          I’ve laid out enough box sides to fill up a 24” by 18” surface,<br />
          the same size as my material and laser bed.
        </p>
      </main>
      <StatusBar />
      <Taskbar />
    </div>
  );
}
